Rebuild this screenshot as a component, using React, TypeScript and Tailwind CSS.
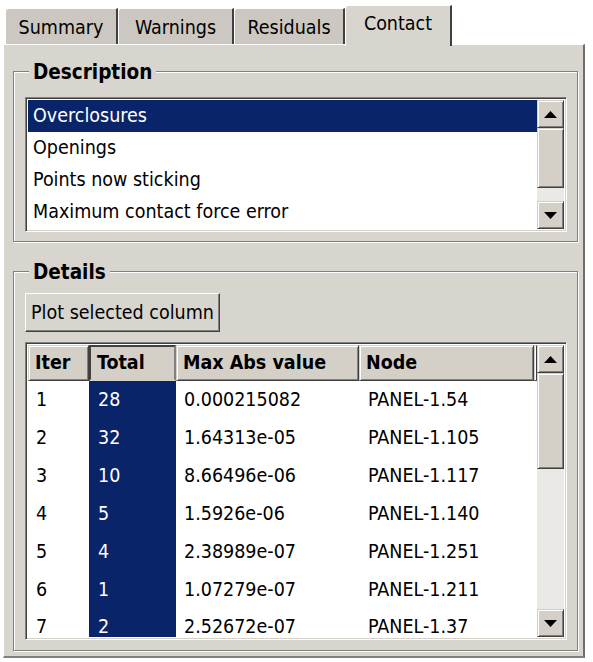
import React from "react";

const font = { fontFamily: '"DejaVu Sans Condensed", "DejaVu Sans", Tahoma, sans-serif' };

const rows = [
  ["1", "28", "0.000215082", "PANEL-1.54"],
  ["2", "32", "1.64313e-05", "PANEL-1.105"],
  ["3", "10", "8.66496e-06", "PANEL-1.117"],
  ["4", "5", "1.5926e-06", "PANEL-1.140"],
  ["5", "4", "2.38989e-07", "PANEL-1.251"],
  ["6", "1", "1.07279e-07", "PANEL-1.211"],
  ["7", "2", "2.52672e-07", "PANEL-1.37"],
];

const items = ["Overclosures", "Openings", "Points now sticking", "Maximum contact force error"];

function Arrow({ up }: { up?: boolean }) {
  return (
    <svg width="13" height="7" viewBox="0 0 13 7">
      <path d={up ? "M6.5 0 L13 7 L0 7 Z" : "M0 0 L13 0 L6.5 7 Z"} fill="#000" />
    </svg>
  );
}

const raised =
  "border border-t-[#d4d0c8] border-l-[#d4d0c8] border-r-[#404040] border-b-[#404040] shadow-[inset_1px_1px_0_#fff,inset_-1px_-1px_0_#808080] bg-[#d4d0c8]";

function ScrollBtn({ up }: { up?: boolean }) {
  return (
    <div className={`h-[28px] w-[27px] shrink-0 flex items-center justify-center ${raised}`}>
      <Arrow up={up} />
    </div>
  );
}

function Scrollbar({ thumb }: { thumb: number }) {
  return (
    <div className="w-[27px] h-full flex flex-col bg-[#ebe9e5]">
      <ScrollBtn up />
      <div className={`w-[27px] shrink-0 ${raised}`} style={{ height: thumb }} />
      <div className="flex-1" />
      <ScrollBtn />
    </div>
  );
}

function Tab({ label, w, active }: { label: string; w: string; active?: boolean }) {
  if (active) {
    return (
      <div
        className={`${w} h-[41px] -mb-[2px] relative z-10 flex items-center justify-center rounded-tl-[3px] bg-[#d8d5cf] border-l border-t border-l-white border-t-white border-r-2 border-r-[#404040] text-[19.5px] text-black`}
      >
        <span className="pb-[4px]">{label}</span>
      </div>
    );
  }
  return (
    <div
      className={`${w} h-[36px] flex items-center justify-center rounded-tl-[3px] bg-[#ccc8c1] border-l border-t border-l-white border-t-white border-r-2 border-r-[#404040] text-[19.5px] text-black`}
    >
      <span className="pt-[2px]">{label}</span>
    </div>
  );
}

const sunken =
  "border border-t-[#808080] border-l-[#808080] border-r-white border-b-white shadow-[inset_1px_1px_0_#404040,inset_-1px_-1px_0_#d4d0c8]";

const group =
  "border border-[#808080] shadow-[inset_1px_1px_0_#fff,1px_1px_0_#fff] p-0 m-0";

export default function App() {
  return (
    <div className="w-[593px] h-[662px] bg-white text-black overflow-hidden" style={font}>
      {/* tab strip */}
      <div className="flex items-end h-[44px] pl-[5px]">
        <Tab label="Summary" w="w-[113px]" />
        <Tab label="Warnings" w="w-[116px]" />
        <Tab label="Residuals" w="w-[111px]" />
        <Tab label="Contact" w="w-[107px]" active />
      </div>

      {/* tab page */}
      <div className="ml-[3px] w-[582px] h-[614px] bg-[#d8d5cf] border-l border-t border-l-white border-t-white border-r-2 border-b-2 border-r-[#6e6d6a] border-b-[#808080] pt-[14px] pl-[9px]">
        <fieldset className={`${group} w-[565px] h-[183px]`}>
          <legend className="ml-[15px] px-[4px] bg-[#d8d5cf] font-bold text-[20.5px] leading-[22px] pt-[2px]">
            Description
          </legend>
          <div className={`mt-[14px] ml-[11px] w-[542px] h-[135px] bg-white flex p-[2px] ${sunken}`}>
            <div className="flex-1 flex flex-col text-[19.5px] leading-[22px] overflow-hidden">
              {items.map((it, i) => (
                <div
                  key={it}
                  className={`h-[32px] shrink-0 flex items-center pl-[5px] ${
                    i === 0 ? "bg-[#0a246a] text-white" : "text-black"
                  }`}
                >
                  {it}
                </div>
              ))}
            </div>
            <Scrollbar thumb={60} />
          </div>
        </fieldset>

        <fieldset className={`${group} mt-[17px] w-[565px] h-[392px]`}>
          <legend className="ml-[15px] px-[4px] bg-[#d8d5cf] font-bold text-[20.5px] leading-[22px] pt-[2px]">
            Details
          </legend>
          <div className="mt-[10px] ml-[11px]">
            <button
              className="h-[39px] px-[5px] flex items-center text-[19.5px] bg-[#d8d5cf] border border-t-white border-l-white border-r-[#404040] border-b-[#404040] shadow-[inset_-1px_-1px_0_#808080]"
            >
              Plot selected column
            </button>
          </div>
          <div className={`mt-[10px] ml-[11px] w-[542px] h-[298px] bg-white flex p-[2px] ${sunken}`}>
            <div className="w-[511px] flex flex-col overflow-hidden">
              <div className="flex h-[36px] shrink-0 font-bold text-[19.5px]">
                <div className={`w-[61px] pl-[6px] flex items-center ${raised}`}>Iter</div>
                <div className="w-[87px] pl-[6px] flex items-center bg-[#d4d0c8] border-2 border-t-[#404040] border-l-[#404040] border-r-[#808080] border-b-[#d4d0c8]">
                  Total
                </div>
                <div className={`w-[183px] pl-[6px] flex items-center ${raised}`}>Max Abs value</div>
                <div className={`w-[175px] pl-[6px] flex items-center ${raised}`}>Node</div>
                <div className={`flex-1 ${raised}`} />
              </div>
              <div className="flex-1 flex flex-col text-[19.5px] leading-[20px]">
                {rows.map((r, i) => {
                  const last = i === rows.length - 1;
                  const h = last ? "h-[28px] items-start pt-[8px]" : "h-[38px] items-center";
                  return (
                    <div key={r[0]} className="flex">
                      <div className={`w-[61px] pl-[8px] flex ${h}`}>{r[0]}</div>
                      <div className={`w-[87px] pl-[9px] flex ${h} bg-[#0a246a] text-white`}>{r[1]}</div>
                      <div className={`w-[183px] pl-[8px] flex ${h}`}>{r[2]}</div>
                      <div className={`w-[175px] pl-[9px] flex ${h}`}>{r[3]}</div>
                    </div>
                  );
                })}
              </div>
            </div>
            <Scrollbar thumb={96} />
          </div>
        </fieldset>
      </div>
    </div>
  );
}
